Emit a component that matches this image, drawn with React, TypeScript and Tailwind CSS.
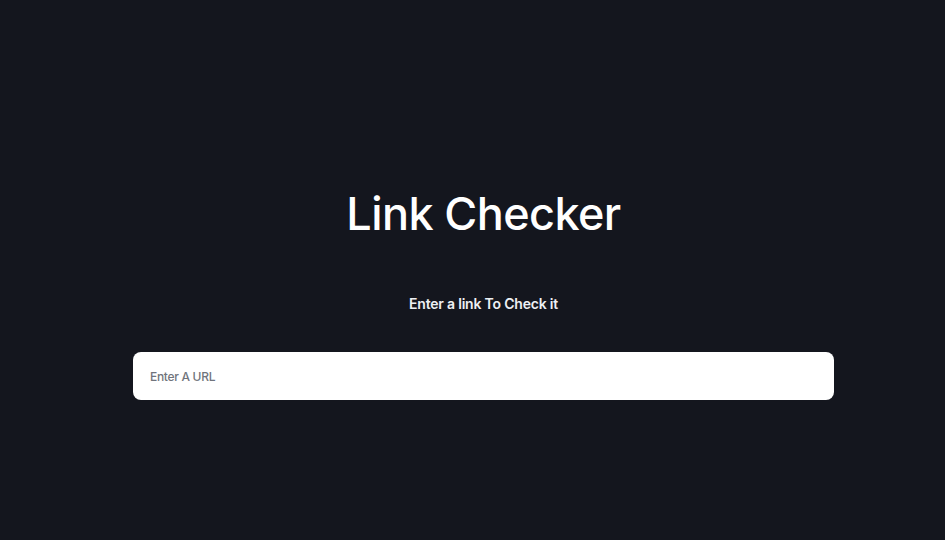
import React from 'react';

const App = () => {
  return (
    <div
      className="min-h-[540px] w-full bg-[#14161e] flex flex-col items-center pl-[22px] text-white"
      style={{ fontFamily: 'Inter, "Noto Sans", sans-serif' }}
    >
      <h1 className="mt-[188px] text-[45px] leading-[52px] font-medium tracking-[-0.6px]">Link Checker</h1>
      <p className="mt-[54px] text-[14px] leading-[20px] font-semibold tracking-[-0.2px] text-[#eef0f4]">
        Enter a link To Check it
      </p>
      <div className="mt-[38px] w-[701px]">
        <input
          type="text"
          placeholder="Enter A URL"
          className="w-full h-[48px] rounded-[8px] bg-white px-[17px] text-[12px] font-medium tracking-[-0.3px] text-gray-800 placeholder:text-[#70747c] outline-none"
        />
      </div>
    </div>
  );
};

export default App;
